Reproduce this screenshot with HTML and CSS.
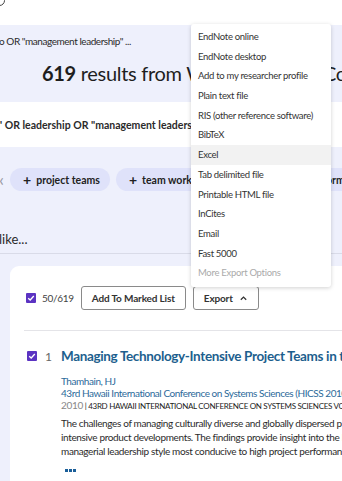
FILE: index.html
```html
<!DOCTYPE html>
<html lang="en">
<head>
  <meta charset="UTF-8" />
  <title>Results</title>
  <meta name="viewport" content="width=device-width, initial-scale=1.0">
  <link rel="stylesheet" href="styles.css">
</head>
<body>
  <div class="page">
    <div class="topbar"><span class="search-ring"></span></div>

    <section class="summary-band">
      <p class="query-line">o OR "management leadership" ...</p>
      <h1 class="results-title"><b>619</b> results from Web of Science Core Collection for:</h1>
    </section>

    <section class="query-band">
      <p class="query-full">" OR leadership OR "management leadership" OR "team efficacy"</p>
    </section>

    <section class="refine-band">
      <div class="chips">
        <span class="chev">&lsaquo;</span>
        <span class="chip"><span class="plus">+</span>project teams</span>
        <span class="chip"><span class="plus">+</span>team work performance</span>
        <span class="chip"><span class="plus">+</span>team formation</span>
      </div>
      <p class="like">like...</p>
    </section>

    <div class="results-wrap">
      <div class="results-card">
        <div class="toolbar">
          <span class="checkbox"><svg viewBox="0 0 10 10"><path d="M2.2 5.2 L4.2 7 L7.8 3" fill="none" stroke="#fff" stroke-width="1.3"/></svg></span>
          <span class="count">50/619</span>
          <button class="btn">Add To Marked List</button>
          <button class="btn">Export <svg class="caret" viewBox="0 0 10 6"><path d="M2 5 L5 2 L8 5" fill="none" stroke="#333" stroke-width="1.4"/></svg></button>
        </div>

        <div class="record">
          <div class="record-head">
            <span class="checkbox"><svg viewBox="0 0 10 10"><path d="M2.2 5.2 L4.2 7 L7.8 3" fill="none" stroke="#fff" stroke-width="1.3"/></svg></span>
            <span class="num">1</span>
            <a class="title">Managing Technology-Intensive Project Teams in the Global Enterprise</a>
          </div>
          <div class="record-body">
            <a class="link">Thamhain, HJ</a>
            <a class="link">43rd Hawaii International Conference on Systems Sciences (HICSS 2010)</a>
            <p class="source"><span class="year">2010</span> | 43RD HAWAII INTERNATIONAL CONFERENCE ON SYSTEMS SCIENCES VOL</p>
            <p class="abstract">
              <span>The challenges of managing culturally diverse and globally dispersed project teams</span>
              <span>intensive product developments. The findings provide insight into the business</span>
              <span>managerial leadership style most conducive to high project performance in</span>
            </p>
            <span class="more"><i></i><i></i><i></i></span>
          </div>
        </div>
      </div>
    </div>
  </div>

  <ul class="export-menu">
    <li>EndNote online</li>
    <li>EndNote desktop</li>
    <li>Add to my researcher profile</li>
    <li>Plain text file</li>
    <li>RIS (other reference software)</li>
    <li>BibTeX</li>
    <li class="active">Excel</li>
    <li>Tab delimited file</li>
    <li>Printable HTML file</li>
    <li>InCites</li>
    <li>Email</li>
    <li>Fast 5000</li>
    <li class="disabled">More Export Options</li>
  </ul>
</body>
</html>
```

FILE: styles.css
```css
:root {
  --lavender: #eef0fc;
  --chip: #dfe2fa;
  --text: #2b2b2b;
  --link: #2c6a9a;
  --title: #1d5f8e;
  --purple: #5b33c2;
}

* { box-sizing: border-box; }

body {
  margin: 0;
  font-family: 'Lato', sans-serif;
  color: var(--text);
  background: #fff;
  overflow: hidden;
}

.page {
  width: 342px;
  overflow: hidden;
}

p { margin: 0; }

.topbar {
  height: 25px;
  position: relative;
}

.search-ring {
  position: absolute;
  left: -6px;
  top: -5px;
  width: 11px;
  height: 11px;
  border: 1.3px solid #444;
  border-radius: 50%;
}

.summary-band {
  background: var(--lavender);
  height: 77px;
  padding-top: 10px;
}

.query-line {
  font-size: 10px;
  line-height: 12px;
  letter-spacing: -0.45px;
  margin-left: -1px;
  white-space: nowrap;
}

.results-title {
  margin: 13px 0 0 42px;
  font-size: 20px;
  line-height: 26px;
  font-weight: 400;
  letter-spacing: -0.3px;
  white-space: nowrap;
  color: #1e1e1e;
}

.results-title b { font-weight: 700; }

.query-band {
  height: 45px;
  padding-top: 17px;
}

.query-full {
  font-size: 10.5px;
  line-height: 13px;
  font-weight: 700;
  white-space: nowrap;
  margin-left: -2px;
}

.refine-band {
  background: var(--lavender);
  padding-top: 21px;
  height: 107px;
  border-bottom: 1px solid #d9dbe8;
}

.chips {
  display: flex;
  align-items: center;
  gap: 6px;
  white-space: nowrap;
}

.chev {
  color: #9a9aa4;
  font-size: 18px;
  line-height: 23px;
  width: 11px;
  margin-left: -1px;
}

.chip {
  display: inline-flex;
  align-items: center;
  height: 23px;
  padding: 0 10px 0 13px;
  border-radius: 12px;
  background: var(--chip);
  font-size: 10.5px;
  font-weight: 700;
  color: #222;
}

.plus {
  font-size: 14px;
  font-weight: 700;
  margin-right: 5px;
}

.like {
  margin-top: 40px;
  font-size: 13px;
  line-height: 16px;
  margin-left: -1px;
}

.results-wrap {
  background: var(--lavender);
  padding: 12px 0 0 10px;
  height: 228px;
}

.results-card {
  background: #fff;
  border-radius: 9px 0 0 0;
  height: 100%;
  padding: 20px 0 0 16px;
}

.toolbar {
  display: flex;
  align-items: center;
  height: 24px;
}

.checkbox {
  width: 10px;
  height: 10px;
  background: var(--purple);
  border-radius: 1px;
  display: inline-block;
  flex-shrink: 0;
}

.checkbox svg {
  display: block;
  width: 10px;
  height: 10px;
}

.count {
  margin: 0 7px 0 6px;
  font-size: 10px;
  letter-spacing: -0.3px;
  color: #444;
}

.btn {
  font-family: inherit;
  font-size: 10px;
  font-weight: 700;
  letter-spacing: -0.15px;
  color: #333;
  background: #fff;
  border: 1px solid #8a8a8a;
  border-radius: 3px;
  height: 24px;
  padding: 0 10px;
  margin-right: 7px;
  display: inline-flex;
  align-items: center;
}

.caret {
  width: 9px;
  height: 6px;
  margin-left: 6px;
}

.record {
  margin-top: 20px;
  margin-left: -2px;
  border-top: 1px solid #e4e4e8;
  padding: 15px 0 0 3px;
}

.record-head {
  display: flex;
  align-items: center;
  white-space: nowrap;
  height: 20px;
}

.num {
  font-size: 12px;
  color: #666;
  margin: 0 9px 0 8px;
}

.title {
  font-size: 13.5px;
  font-weight: 700;
  letter-spacing: -0.35px;
  color: var(--title);
}

.record-body {
  padding-left: 34px;
  padding-top: 9px;
  white-space: nowrap;
}

.link {
  display: block;
  font-size: 10px;
  line-height: 12px;
  letter-spacing: -0.45px;
  color: var(--link);
}

.source {
  font-size: 8px;
  line-height: 12px;
  letter-spacing: -0.3px;
  color: #222;
}

.year {
  font-size: 10px;
  color: #888;
}

.abstract {
  margin-top: 4px;
  font-size: 10px;
  line-height: 14px;
  letter-spacing: -0.35px;
}

.abstract span { display: block; }

.more {
  display: flex;
  gap: 1.5px;
  margin: 11px 0 0 4px;
}

.more i {
  width: 2.5px;
  height: 2.5px;
  background: #1a5e99;
}

.export-menu {
  position: absolute;
  left: 191px;
  top: 24px;
  width: 140px;
  margin: 0;
  padding: 3px 0 4px;
  list-style: none;
  background: #fff;
  border-radius: 3px;
  box-shadow: 0 1px 4px rgba(0, 0, 0, 0.18);
}

.export-menu li {
  height: 19.7px;
  line-height: 19.7px;
  padding-left: 7px;
  font-size: 9.5px;
  letter-spacing: -0.3px;
  color: #333;
  white-space: nowrap;
}

.export-menu li.active { background: #f2f2f2; }

.export-menu li.disabled { color: #aaa; }
```
